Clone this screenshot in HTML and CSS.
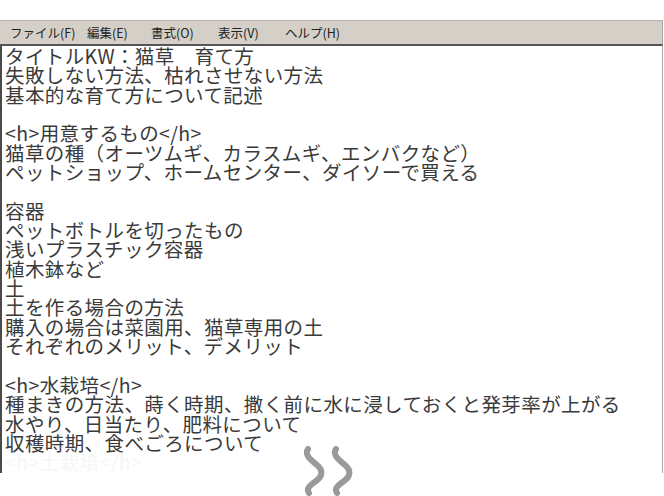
FILE: index.html
```html
<!DOCTYPE html>
<html lang="ja">
<head>
<meta charset="utf-8">
<title>メモ帳</title>
<link rel="stylesheet" href="styles.css">
</head>
<body>
<div class="window">
  <div class="menubar">
    <span class="menu-item">ファイル(F)</span>
    <span class="menu-item">編集(E)</span>
    <span class="menu-item">書式(O)</span>
    <span class="menu-item">表示(V)</span>
    <span class="menu-item">ヘルプ(H)</span>
  </div>
  <div class="editor">
<div class="line">タイトルKW：猫草　育て方</div>
<div class="line">失敗しない方法、枯れさせない方法</div>
<div class="line">基本的な育て方について記述</div>
<div class="line"> </div>
<div class="line">&lt;h&gt;用意するもの&lt;/h&gt;</div>
<div class="line">猫草の種（オーツムギ、カラスムギ、エンバクなど）</div>
<div class="line">ペットショップ、ホームセンター、ダイソーで買える</div>
<div class="line"> </div>
<div class="line">容器</div>
<div class="line">ペットボトルを切ったもの</div>
<div class="line">浅いプラスチック容器</div>
<div class="line">植木鉢など</div>
<div class="line">土</div>
<div class="line">土を作る場合の方法</div>
<div class="line">購入の場合は菜園用、猫草専用の土</div>
<div class="line">それぞれのメリット、デメリット</div>
<div class="line"> </div>
<div class="line">&lt;h&gt;水栽培&lt;/h&gt;</div>
<div class="line">種まきの方法、蒔く時期、撒く前に水に浸しておくと発芽率が上がる</div>
<div class="line">水やり、日当たり、肥料について</div>
<div class="line">収穫時期、食べごろについて</div>
<div class="line faded">&lt;h&gt;土栽培&lt;/h&gt;</div>
  </div>
</div>
<div class="more">
  <svg class="squiggle" width="664" height="50" viewBox="0 446 664 50" aria-hidden="true">
    <path d="M308 449 C304 455 311 460 317 465 C323 470 323 476 316 481 C309 486 306 489 309 493" />
    <path d="M336 449 C332 455 339 460 345 465 C351 470 351 476 344 481 C337 486 334 489 337 493" />
  </svg>
</div>
</body>
</html>
```

FILE: styles.css
```css
html, body {
  margin: 0;
  padding: 0;
  background: #ffffff;
}

body {
  width: 664px;
  height: 496px;
  overflow: hidden;
  position: relative;
}

.window {
  margin-top: 20px;
  width: 663px;
}

.menubar {
  display: grid;
  grid-template-columns: 77px 64px 67px 67px auto;
  align-items: center;
  height: 23px;
  padding-left: 10px;
  background: #d4d0c8;
  border-top: 1px solid #b8b5ae;
  border-right: 1px solid #a8a8a8;
  border-bottom: 2px solid #555555;
  font-family: "Noto Sans CJK JP", "Liberation Sans", sans-serif;
  font-size: 12.5px;
  color: #222222;
}

.menu-item {
  line-height: 15px;
  white-space: nowrap;
}

.editor {
  height: 427px;
  overflow: hidden;
  background: #ffffff;
  border-left: 2px solid #4a4a4a;
  border-right: 1px solid #a8a8a8;
  padding-left: 3px;
  font-family: "Noto Sans CJK JP", sans-serif;
  font-size: 19.5px;
  letter-spacing: 0.4px;
  line-height: 19.35px;
  color: #3a3a3a;
}

.line {
  white-space: pre;
  height: 19.35px;
}

.faded {
  color: #f6f6f6;
}

.more {
  position: absolute;
  left: 0;
  top: 446px;
  width: 664px;
  height: 50px;
}

.squiggle {
  display: block;
  width: 664px;
  height: 50px;
}

.squiggle path {
  fill: none;
  stroke: #9a9a9a;
  stroke-width: 6;
  stroke-linecap: round;
}
```
